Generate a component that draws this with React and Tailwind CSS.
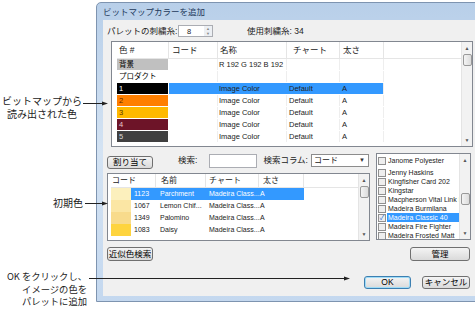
import React from "react";

const font = { fontFamily: '"Liberation Sans", "Noto Sans CJK JP", sans-serif' };

const tableRows = [
  { label: "背景", swatch: "bg-[#c0c0c0]", ink: "text-black", name: "R 192 G 192 B 192" },
  { label: "プロダクト", swatch: "", ink: "text-black" },
  { label: "1", swatch: "bg-black", ink: "text-white", name: "Image Color", chart: "Default", weight: "A", selected: true },
  { label: "2", swatch: "bg-[#ff7f00]", ink: "text-[#5a2a00]", name: "Image Color", chart: "Default", weight: "A" },
  { label: "3", swatch: "bg-[#ffb900]", ink: "text-[#5a3a00]", name: "Image Color", chart: "Default", weight: "A" },
  { label: "4", swatch: "bg-[#6d1428]", ink: "text-[#e8c8cc]", name: "Image Color", chart: "Default", weight: "A" },
  { label: "5", swatch: "bg-[#404040]", ink: "text-[#d8d8d8]", name: "Image Color", chart: "Default", weight: "A" },
];

const threads = [
  { code: "1123", name: "Parchment", swatch: "bg-[#fcf0bd]", selected: true },
  { code: "1067", name: "Lemon Chif...", swatch: "bg-[#fbe6a4]" },
  { code: "1349", name: "Palomino", swatch: "bg-[#f8db8c]" },
  { code: "1083", name: "Daisy", swatch: "bg-[#fed43e]" },
];

const charts = [
  "Jenny Haskins",
  "Kingfisher Card 202",
  "Kingstar",
  "Macpherson Vital Link Ra",
  "Madeira Burmilana",
  "Madeira Classic 40",
  "Madeira Fire Fighter",
  "Madeira Frosted Matt",
];

function WinButton({ children, className = "" }) {
  return (
    <div
      className={`flex items-center justify-center rounded-[3px] border border-[#707070] bg-gradient-to-b from-[#f4f4f4] to-[#dadada] text-[8.5px] text-black ${className}`}
    >
      {children}
    </div>
  );
}

function VScroll({ className = "", thumb = "mt-[2px]" }) {
  return (
    <div className={`flex w-[11px] shrink-0 flex-col items-center border-l border-[#e4e4e4] bg-[#f2f2f2] ${className}`}>
      <span className="mt-[3px] text-[5px] leading-[6px] text-[#555]">▲</span>
      <div className={`h-[12px] w-[9px] rounded-[2px] border border-[#999] bg-gradient-to-r from-[#f4f4f4] to-[#dcdcdc] ${thumb}`} />
      <div className="flex-1" />
      <span className="mb-[3px] text-[5px] leading-[6px] text-[#555]">▼</span>
    </div>
  );
}

function PaletteTable() {
  return (
    <div className="ml-[4px] mt-[4px] flex h-[106px] w-[362px] border border-[#828790] bg-white">
      <div className="flex flex-1 flex-col pl-[5px]">
        <div className="flex h-[17px] items-center border-b border-[#e5e5e5] text-[8.5px] text-[#222]">
          <div className="h-full w-[52px] border-r border-[#e5e5e5] pl-[2px] leading-[17px]">色 #</div>
          <div className="h-full w-[49px] border-r border-[#e5e5e5] pl-[3px] leading-[17px]">コード</div>
          <div className="h-full w-[69px] border-r border-[#e5e5e5] pl-[2px] leading-[17px]">名称</div>
          <div className="h-full w-[53px] border-r border-[#e5e5e5] pl-[6px] leading-[17px]">チャート</div>
          <div className="h-full w-[44px] border-r border-[#e5e5e5] pl-[3px] leading-[17px]">太さ</div>
        </div>
        {tableRows.map((r) => (
          <div key={r.label} className="flex h-[12px] text-[7.5px] leading-[11px]">
            <div className={`h-[11px] w-[51px] pl-[2px] ${r.swatch} ${r.ink}`}>{r.label}</div>
            <div className="w-[1px]" />
            <div className={`h-[11px] w-[48px] ${r.selected ? "bg-[#3399ff]" : ""}`} />
            <div className={`h-[11px] w-[1px] ${r.selected ? "bg-[#3399ff]" : "bg-[#eee]"}`} />
            <div className={`h-[11px] w-[68px] whitespace-nowrap pl-[1px] text-[#222] ${r.selected ? "bg-[#3399ff]" : ""}`}>{r.name}</div>
            <div className={`h-[11px] w-[1px] ${r.selected ? "bg-[#3399ff]" : "bg-[#eee]"}`} />
            <div className={`h-[11px] w-[52px] pl-[2px] text-[#222] ${r.selected ? "bg-[#3399ff]" : ""}`}>{r.chart}</div>
            <div className={`h-[11px] w-[1px] ${r.selected ? "bg-[#3399ff]" : "bg-[#eee]"}`} />
            <div className={`h-[11px] w-[43px] pl-[2px] text-[#222] ${r.selected ? "bg-[#3399ff]" : ""}`}>{r.weight}</div>
            <div className="h-[11px] w-[1px] bg-[#eee]" />
          </div>
        ))}
      </div>
      <VScroll thumb="mt-[3px]" />
    </div>
  );
}

function ThreadList() {
  return (
    <div className="mt-[5px] flex h-[68px] w-[263px] border border-[#828790] bg-white">
      <div className="flex flex-1 flex-col pl-[3px]">
        <div className="flex h-[14px] items-center border-b border-[#e5e5e5] text-[8px] text-[#222]">
          <div className="h-full w-[45px] border-r border-[#e5e5e5] pl-[1px] leading-[14px]">コード</div>
          <div className="h-full w-[50px] border-r border-[#e5e5e5] pl-[5px] leading-[14px]">名前</div>
          <div className="h-full w-[53px] border-r border-[#e5e5e5] pl-[3px] leading-[14px]">チャート</div>
          <div className="h-full w-[45px] border-r border-[#e5e5e5] pl-[4px] leading-[14px]">太さ</div>
        </div>
        {threads.map((t) => (
          <div key={t.code} className="flex h-[12px] whitespace-nowrap text-[7px] leading-[12px]">
            <div className={`h-[12px] w-[20px] ${t.swatch}`} />
            <div className={`flex w-[173px] ${t.selected ? "bg-[#3399ff] text-white" : "text-[#222]"}`}>
              <div className="w-[25px] pl-[3px]">{t.code}</div>
              <div className="w-[50px] pl-[4px]">{t.name}</div>
              <div className="w-[53px] pl-[3px]">Madeira Class...</div>
              <div className="w-[45px] pl-[1px]">A</div>
            </div>
          </div>
        ))}
      </div>
      <VScroll thumb="mt-[3px]" />
    </div>
  );
}

function ChartList() {
  return (
    <div className="flex h-[87px] w-[95px] border border-[#828790] bg-white">
      <div className="flex flex-1 flex-col overflow-hidden pt-[2px] text-[7px] leading-[9px] text-[#222]">
        <div className="mb-[3px] flex items-center">
          <span className="mx-[1px] h-[8px] w-[8px] shrink-0 border border-[#8f8f8f] bg-[#eee]" />
          <span className="whitespace-nowrap pl-[1px]">Janome Polyester</span>
        </div>
        {charts.map((c) => {
          const on = c === "Madeira Classic 40";
          return (
            <div key={c} className="flex h-[9px] items-center">
              <span className="mx-[1px] flex h-[8px] w-[8px] shrink-0 items-center justify-center border border-[#8f8f8f] bg-[#eee] text-[7px] leading-[7px] text-[#2a6fd1]">
                {on ? "✓" : ""}
              </span>
              <span className={`flex-1 overflow-hidden whitespace-nowrap pl-[1px] ${on ? "bg-[#3399ff] text-white" : ""}`}>{c}</span>
            </div>
          );
        })}
      </div>
      <VScroll thumb="mt-[30px]" />
    </div>
  );
}

function Dialog() {
  return (
    <div className="mt-[2px] h-[300px] w-[392px] shrink-0 rounded-t-[5px] border border-[#7e94b0] bg-gradient-to-b from-[#b8cfe9] via-[#d4e3f3] to-[#c4d8ef]">
      <div className="flex h-[17px] items-center pl-[6px] pt-[1px] text-[8.5px] text-[#1e395b]">ビットマップカラーを追加</div>
      <div className="ml-[6px] flex h-[276px] flex-col bg-[#f0f0f0] pl-[4px] pt-[5px] text-[8.5px] text-[#222]">
        <div className="flex h-[12px] items-center">
          <span className="w-[71px]">パレットの刺繍糸:</span>
          <div className="flex h-[12px] w-[35px] border border-[#abadb3] bg-white">
            <span className="flex-1 pl-[8px] text-[7.5px] leading-[11px]">8</span>
            <div className="flex w-[8px] flex-col items-center justify-center bg-[#eceff3] text-[4px] leading-[5px] text-[#888]">
              <span>▲</span>
              <span>▼</span>
            </div>
          </div>
          <span className="ml-[34px]">使用刺繍糸: 34</span>
        </div>

        <PaletteTable />

        <div className="mt-[6px] flex">
          <div className="flex w-[267px] flex-col">
            <div className="flex h-[15px] items-center">
              <WinButton className="mt-[3px] h-[13px] w-[46px]">割り当て</WinButton>
              <span className="ml-[25px]">検索:</span>
              <div className="ml-[12px] h-[14px] w-[48px] border border-[#abadb3] bg-white" />
              <span className="ml-[6px]">検索コラム:</span>
              <div className="ml-[3px] flex h-[13px] w-[58px] items-center border border-[#8c8c8c] bg-white pl-[2px] pr-[3px]">
                <span className="flex-1 text-[8px]">コード</span>
                <span className="text-[6px] text-[#333]">▼</span>
              </div>
            </div>
            <ThreadList />
          </div>
          <div className="ml-[2px]">
            <ChartList />
          </div>
        </div>

        <div className="mt-[6px] flex h-[14px] items-center">
          <WinButton className="h-[14px] w-[46px]">近似色検索</WinButton>
          <WinButton className="ml-[257px] h-[14px] w-[60px]">管理</WinButton>
        </div>

        <div className="mt-[15px] flex h-[13px] items-center">
          <WinButton className="ml-[257px] h-[13px] w-[47px] !border-[#3c7fb1] shadow-[inset_0_0_0_1px_#9fdcf7]">OK</WinButton>
          <WinButton className="ml-[11px] h-[13px] w-[48px]">キャンセル</WinButton>
        </div>
      </div>
    </div>
  );
}

export default function App() {
  return (
    <div className="relative h-[321px] w-[475px] overflow-hidden bg-white" style={font}>
      <div className="flex">
        <div className="relative w-[96px] shrink-0 text-[10px] leading-[13px] text-[#222]" style={{ fontFamily: '"Noto Sans CJK JP", sans-serif' }}>
          <div className="absolute left-[2px] top-[94px] w-[80px] whitespace-nowrap text-center">
            ビットマップから
            <br />
            読み出された色
          </div>
          <div className="absolute left-[53px] top-[196px] w-[30px] whitespace-nowrap">初期色</div>
          <div className="absolute left-0 top-[270px] w-[87px] whitespace-nowrap text-right text-[9.3px] leading-[12.5px]">
            OK をクリックし、
            <br />
            イメージの色を
            <br />
            パレットに追加
          </div>
        </div>
        <Dialog />
      </div>
      <svg className="pointer-events-none absolute left-0 top-0" width="475" height="321">
        <line x1="83" y1="103.5" x2="104" y2="103.5" stroke="#222" strokeWidth="1" />
        <polygon points="108,103.5 102,101.5 102,105.5" fill="#222" />
        <line x1="85" y1="203.5" x2="104" y2="203.5" stroke="#222" strokeWidth="1" />
        <polygon points="108,203.5 102,201.5 102,205.5" fill="#222" />
        <line x1="89" y1="278.5" x2="346" y2="278.5" stroke="#222" strokeWidth="1" />
        <polygon points="350,278.5 344,276.5 344,280.5" fill="#222" />
      </svg>
    </div>
  );
}
